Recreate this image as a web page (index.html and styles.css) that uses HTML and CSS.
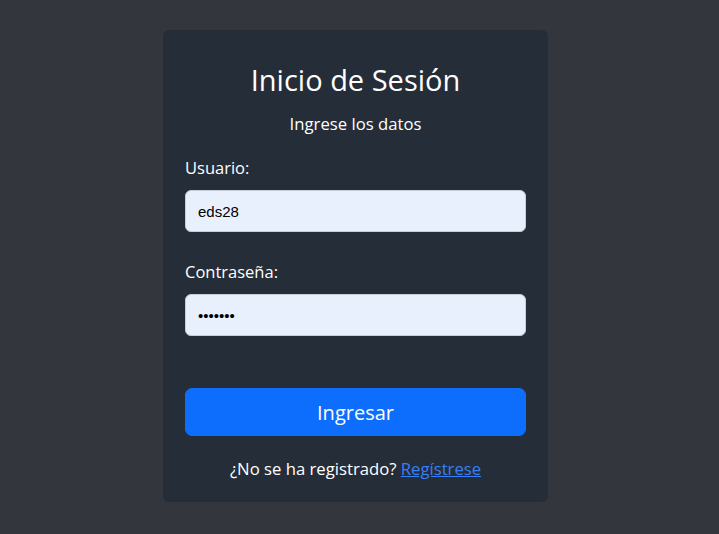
FILE: index.html
```html
<!DOCTYPE html>
<html lang="es">
<head>
<meta charset="utf-8">
<title>Inicio de Sesión</title>
<link rel="stylesheet" href="styles.css">
</head>
<body>
<main class="page">
  <form class="card">
    <h1 class="title">Inicio de Sesión</h1>
    <p class="subtitle">Ingrese los datos</p>
    <label class="label label-first" for="usuario">Usuario:</label>
    <input class="field" id="usuario" type="text" value="eds28">
    <label class="label" for="clave">Contraseña:</label>
    <input class="field" id="clave" type="password" value="eds2828">
    <button class="btn" type="button">Ingresar</button>
    <p class="footer">¿No se ha registrado? <a class="link" href="#">Regístrese</a></p>
  </form>
</main>
</body>
</html>
```
FILE: styles.css
```css
* { box-sizing: border-box; }
html, body {
  margin: 0;
  padding: 0;
  background: #33363d;
  height: 100%;
}
body {
  font-family: "Open Sans", "Noto Sans", sans-serif;
  color: #ffffff;
}
.page {
  display: flex;
  justify-content: center;
  padding: 30px 8px 0 0;
}
.card {
  width: 385px;
  background: #252d38;
  border-radius: 6px;
  padding: 32px 22px 21px;
  display: flex;
  flex-direction: column;
}
.title {
  margin: 0;
  font-size: 29px;
  line-height: 35px;
  font-weight: 400;
  text-align: center;
}
.subtitle {
  margin: 15px 0 0;
  font-size: 16.7px;
  line-height: 24px;
  text-align: center;
}
.label {
  display: block;
  margin-top: 28px;
  font-size: 16.5px;
  line-height: 24px;
}
.label-first {
  margin-top: 20px;
}
.field {
  display: block;
  width: 100%;
  height: 42px;
  margin: 10px 0 0;
  padding: 0 12px;
  border: 1px solid #c9ced6;
  border-radius: 6px;
  background: #e8f0fe;
  color: #000;
  font-family: "Liberation Sans", Arial, sans-serif;
  font-size: 15px;
  outline: none;
}
.btn {
  display: block;
  width: 100%;
  height: 48px;
  margin-top: 52px;
  padding: 1px 0 0;
  border: 1px solid #0d6efd;
  border-radius: 7px;
  background: #0d6efd;
  color: #fff;
  font-family: "Open Sans", "Noto Sans", sans-serif;
  font-size: 20px;
  line-height: 44px;
  cursor: pointer;
}
.footer {
  margin: 21px 0 0;
  font-size: 16.7px;
  line-height: 24px;
  text-align: center;
}
.link {
  color: #3780f6;
  text-decoration: underline;
}
```
